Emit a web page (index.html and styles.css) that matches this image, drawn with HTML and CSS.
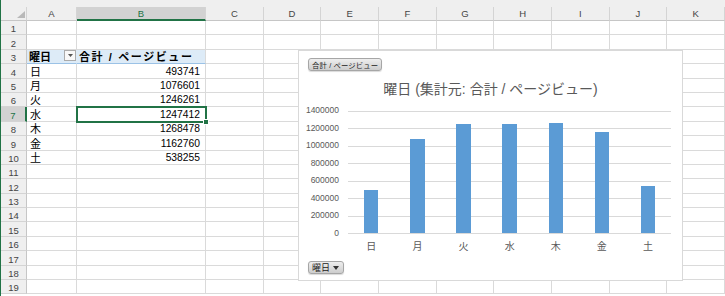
FILE: index.html
```html
<!DOCTYPE html>
<html lang="ja">
<head>
  <meta charset="UTF-8" />
  <title>ピボットグラフ</title>
  <link rel="stylesheet" href="styles.css">
</head>
<body>
<div class="page">
  <!-- 数式バーの下端 -->
  <div class="strip"></div>

  <!-- ワークシート -->
  <div class="sheet">
    <div class="corner"><svg width="8" height="7" viewBox="0 0 8 7"><polygon points="8,0 8,7 0,7" fill="#b9b9b9"/></svg></div>
    <div class="ch">A</div><div class="ch sel">B</div><div class="ch">C</div><div class="ch">D</div><div class="ch">E</div><div class="ch">F</div><div class="ch">G</div><div class="ch">H</div><div class="ch">I</div><div class="ch">J</div><div class="ch">K</div>

    <div class="rh">1</div><div class="c"></div><div class="c"></div><div class="c"></div><div class="c"></div><div class="c"></div><div class="c"></div><div class="c"></div><div class="c"></div><div class="c"></div><div class="c"></div><div class="c"></div>
    <div class="rh">2</div><div class="c"></div><div class="c"></div><div class="c"></div><div class="c"></div><div class="c"></div><div class="c"></div><div class="c"></div><div class="c"></div><div class="c"></div><div class="c"></div><div class="c"></div>
    <div class="rh">3</div>
    <div class="c hd hd-a"><span>曜日</span><span class="filter"><svg width="5" height="3" viewBox="0 0 5 3"><polygon points="0,0 5,0 2.5,3" fill="#555"/></svg></span></div>
    <div class="c hd hd-b">合計 / ページビュー</div>
    <div class="c"></div><div class="c"></div><div class="c"></div><div class="c"></div><div class="c"></div><div class="c"></div><div class="c"></div><div class="c"></div><div class="c"></div>
    <div class="rh">4</div><div class="c jp">日</div><div class="c n">493741</div><div class="c"></div><div class="c"></div><div class="c"></div><div class="c"></div><div class="c"></div><div class="c"></div><div class="c"></div><div class="c"></div><div class="c"></div>
    <div class="rh">5</div><div class="c jp">月</div><div class="c n">1076601</div><div class="c"></div><div class="c"></div><div class="c"></div><div class="c"></div><div class="c"></div><div class="c"></div><div class="c"></div><div class="c"></div><div class="c"></div>
    <div class="rh">6</div><div class="c jp">火</div><div class="c n">1246261</div><div class="c"></div><div class="c"></div><div class="c"></div><div class="c"></div><div class="c"></div><div class="c"></div><div class="c"></div><div class="c"></div><div class="c"></div>
    <div class="rh sel">7</div><div class="c jp">水</div><div class="c n cur">1247412<span class="handle"></span></div><div class="c"></div><div class="c"></div><div class="c"></div><div class="c"></div><div class="c"></div><div class="c"></div><div class="c"></div><div class="c"></div><div class="c"></div>
    <div class="rh">8</div><div class="c jp">木</div><div class="c n">1268478</div><div class="c"></div><div class="c"></div><div class="c"></div><div class="c"></div><div class="c"></div><div class="c"></div><div class="c"></div><div class="c"></div><div class="c"></div>
    <div class="rh">9</div><div class="c jp">金</div><div class="c n">1162760</div><div class="c"></div><div class="c"></div><div class="c"></div><div class="c"></div><div class="c"></div><div class="c"></div><div class="c"></div><div class="c"></div><div class="c"></div>
    <div class="rh">10</div><div class="c jp">土</div><div class="c n">538255</div><div class="c"></div><div class="c"></div><div class="c"></div><div class="c"></div><div class="c"></div><div class="c"></div><div class="c"></div><div class="c"></div><div class="c"></div>
    <div class="rh">11</div><div class="c"></div><div class="c"></div><div class="c"></div><div class="c"></div><div class="c"></div><div class="c"></div><div class="c"></div><div class="c"></div><div class="c"></div><div class="c"></div><div class="c"></div>
    <div class="rh">12</div><div class="c"></div><div class="c"></div><div class="c"></div><div class="c"></div><div class="c"></div><div class="c"></div><div class="c"></div><div class="c"></div><div class="c"></div><div class="c"></div><div class="c"></div>
    <div class="rh">13</div><div class="c"></div><div class="c"></div><div class="c"></div><div class="c"></div><div class="c"></div><div class="c"></div><div class="c"></div><div class="c"></div><div class="c"></div><div class="c"></div><div class="c"></div>
    <div class="rh">14</div><div class="c"></div><div class="c"></div><div class="c"></div><div class="c"></div><div class="c"></div><div class="c"></div><div class="c"></div><div class="c"></div><div class="c"></div><div class="c"></div><div class="c"></div>
    <div class="rh">15</div><div class="c"></div><div class="c"></div><div class="c"></div><div class="c"></div><div class="c"></div><div class="c"></div><div class="c"></div><div class="c"></div><div class="c"></div><div class="c"></div><div class="c"></div>
    <div class="rh">16</div><div class="c"></div><div class="c"></div><div class="c"></div><div class="c"></div><div class="c"></div><div class="c"></div><div class="c"></div><div class="c"></div><div class="c"></div><div class="c"></div><div class="c"></div>
    <div class="rh">17</div><div class="c"></div><div class="c"></div><div class="c"></div><div class="c"></div><div class="c"></div><div class="c"></div><div class="c"></div><div class="c"></div><div class="c"></div><div class="c"></div><div class="c"></div>
    <div class="rh">18</div><div class="c"></div><div class="c"></div><div class="c"></div><div class="c"></div><div class="c"></div><div class="c"></div><div class="c"></div><div class="c"></div><div class="c"></div><div class="c"></div><div class="c"></div>
    <div class="rh">19</div><div class="c"></div><div class="c"></div><div class="c"></div><div class="c"></div><div class="c"></div><div class="c"></div><div class="c"></div><div class="c"></div><div class="c"></div><div class="c"></div><div class="c"></div>
  </div>

  <!-- ピボットグラフ (シートの上に浮いている) -->
  <div class="chart">
    <div class="pivot-btn top">合計 / ページビュー</div>
    <div class="chart-title">曜日 (集計元: 合計 / ページビュー)</div>
    <div class="plot-row">
      <div class="yaxis">
        <span>1400000</span><span>1200000</span><span>1000000</span><span>800000</span>
        <span>600000</span><span>400000</span><span>200000</span><span>0</span>
      </div>
      <div class="plot">
        <div class="bar" style="height:35.27%"></div>
        <div class="bar" style="height:76.90%"></div>
        <div class="bar" style="height:89.02%"></div>
        <div class="bar" style="height:89.10%"></div>
        <div class="bar" style="height:90.61%"></div>
        <div class="bar" style="height:83.05%"></div>
        <div class="bar" style="height:38.45%"></div>
      </div>
    </div>
    <div class="xaxis">
      <span>日</span><span>月</span><span>火</span><span>水</span><span>木</span><span>金</span><span>土</span>
    </div>
    <div class="pivot-btn bottom"><span>曜日</span><svg width="6" height="4" viewBox="0 0 6 4"><polygon points="0,0 6,0 3,4" fill="#333"/></svg></div>
  </div>
</div>
</body>
</html>
```

FILE: styles.css
```css
* {
  box-sizing: border-box;
}

body {
  margin: 0;
  background: #ffffff;
  font-family: "Liberation Sans", "Noto Sans CJK JP", sans-serif;
  overflow: hidden;
}

.page {
  position: relative;
  width: 725px;
  height: 296px;
  border-left: 1px solid #217346;
  overflow: hidden;
}

.strip {
  height: 7px;
  background: #efefef;
}

/* =================
   ワークシートのグリッド
   ================= */
.sheet {
  display: grid;
  grid-template-columns: 26px 50px 129px repeat(9, 1fr);
  grid-template-rows: 14px;
  grid-auto-rows: 14.4px;
}

.corner {
  background: #efefef;
  border-right: 1px solid #d4d4d4;
  border-bottom: 1px solid #c6c6c6;
  display: flex;
  justify-content: flex-end;
  align-items: flex-end;
  padding: 0 1px 2px 0;
}

.corner svg {
  display: block;
}

/* 列見出し */
.ch {
  background: #efefef;
  border-right: 1px solid #d4d4d4;
  border-bottom: 1px solid #c6c6c6;
  font-size: 9.5px;
  color: #444444;
  text-align: center;
  line-height: 13px;
}

.ch.sel {
  background: #d2d2d2;
  color: #217346;
  border-bottom: 2px solid #217346;
}

/* 行見出し */
.rh {
  background: #efefef;
  border-right: 1px solid #c6c6c6;
  border-bottom: 1px solid #d4d4d4;
  font-size: 9.5px;
  color: #444444;
  display: flex;
  justify-content: center;
  align-items: flex-end;
  line-height: 11px;
}

.rh.sel {
  background: #d2d2d2;
  color: #217346;
  border-right: 2px solid #217346;
}

/* セル */
.c {
  border-right: 1px solid #dadada;
  border-bottom: 1px solid #dadada;
  font-size: 10.3px;
  color: #000000;
  display: flex;
  align-items: flex-end;
  line-height: 12px;
  padding: 0 3px;
  white-space: nowrap;
}

.jp {
  font-size: 11px;
}

.n {
  justify-content: flex-end;
  padding-right: 5px;
}

/* ピボットテーブルの見出し行 */
.hd {
  background: #ddebf7;
  border-bottom-color: #9bc2e6;
  font-weight: bold;
  font-size: 11px;
  padding-left: 2px;
}

.hd-a {
  border-right-color: #ddebf7;
  justify-content: space-between;
  padding-right: 0;
}

.hd-b {
  letter-spacing: 1.6px;
}

.filter {
  width: 12px;
  height: 11px;
  margin-bottom: 1px;
  border: 1px solid #ababab;
  background: #f8f8f8;
  display: flex;
  align-items: center;
  justify-content: center;
  align-self: center;
}

.filter svg {
  display: block;
}

/* アクティブセル */
.cur {
  position: relative;
  outline: 2px solid #217346;
  outline-offset: -1px;
  z-index: 1;
}

.handle {
  position: absolute;
  right: -4px;
  bottom: -4px;
  width: 6px;
  height: 6px;
  background: #217346;
  border: 1px solid #ffffff;
}

/* =================
   ピボットグラフ
   ================= */
.chart {
  position: absolute;
  left: 297px;
  top: 50px;
  width: 385px;
  height: 231px;
  border: 1px solid #d9d9d9;
  background: #ffffff;
  display: flex;
  flex-direction: column;
  align-items: flex-start;
  z-index: 2;
}

.pivot-btn {
  height: 13px;
  border: 1px solid #a6a6a6;
  border-radius: 3px;
  background: linear-gradient(#eeeeee, #cdcdcd);
  box-shadow: 0 1px 1px rgba(0, 0, 0, 0.15);
  color: #222222;
  display: flex;
  align-items: center;
  white-space: nowrap;
}

.pivot-btn.top {
  margin: 7px 0 0 9px;
  width: 74px;
  font-size: 7.4px;
  letter-spacing: 0.1px;
  padding: 0 3px;
}

.pivot-btn.bottom {
  margin: 7.3px 0 0 9px;
  width: 36px;
  font-size: 9px;
  padding: 0 4px 0 3px;
  justify-content: space-between;
}

.pivot-btn svg {
  display: block;
}

.chart-title {
  align-self: stretch;
  text-align: center;
  margin-top: 9px;
  height: 18px;
  line-height: 18px;
  font-size: 14px;
  color: #595959;
  white-space: nowrap;
}

.plot-row {
  display: flex;
  align-items: flex-start;
  margin-top: 4.3px;
}

.yaxis {
  width: 40px;
  margin-bottom: -8.7px;
  display: flex;
  flex-direction: column;
}

.yaxis span {
  height: 17.47px;
  line-height: 17.47px;
  text-align: right;
  font-size: 8.5px;
  color: #595959;
}

.plot {
  margin: 8.73px 0 0 9.3px;
  width: 322.7px;
  height: 123.3px;
  padding-bottom: 1px;
  background: repeating-linear-gradient(to bottom, #d9d9d9 0 1px, transparent 1px 17.47px);
  display: flex;
  align-items: flex-end;
  justify-content: space-around;
}

.bar {
  width: 14.3px;
  background: #5b9bd5;
}

.xaxis {
  display: flex;
  margin: 5.4px 0 0 49.3px;
  width: 322.7px;
}

.xaxis span {
  flex: 1;
  text-align: center;
  font-size: 10px;
  line-height: 14px;
  color: #595959;
}
```
